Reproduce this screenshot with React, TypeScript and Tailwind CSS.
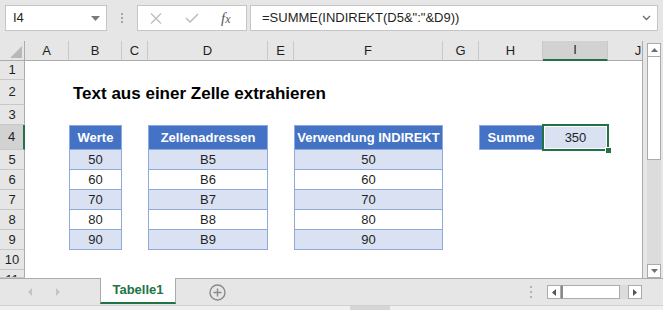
import React from "react";

const colHeaders: { l: string; sel?: boolean; j?: boolean }[] = [
  { l: "A" },
  { l: "B" },
  { l: "C" },
  { l: "D" },
  { l: "E" },
  { l: "F" },
  { l: "G" },
  { l: "H" },
  { l: "I", sel: true },
  { l: "J", j: true },
];

const rowStart = [
  "row-start-2",
  "row-start-3",
  "row-start-4",
  "row-start-5",
  "row-start-6",
  "row-start-7",
  "row-start-8",
  "row-start-9",
  "row-start-10",
  "row-start-11",
  "row-start-12",
];

function Tbl({ header, rows }: { header: string; rows: string[] }) {
  return (
    <div className="flex flex-col">
      <div className="h-[25px] bg-[#4472C4] border border-[#8EA9DB] flex items-center justify-center font-bold text-white whitespace-nowrap">
        {header}
      </div>
      {rows.map((r, i) => (
        <div
          key={i}
          className={`h-[20px] border-x border-b border-[#8EA9DB] flex items-center justify-center ${
            i % 2 === 0 ? "bg-[#D9E1F2]" : "bg-white"
          }`}
        >
          {r}
        </div>
      ))}
    </div>
  );
}

export default function App() {
  return (
    <div className="w-[663px] h-[310px] overflow-hidden bg-[#E6E6E6] flex flex-col font-['Liberation_Sans',Arial,sans-serif] text-[13px] text-[#1f1f1f]">
      {/* Formula bar */}
      <div className="h-[41px] flex items-start pt-[5px] pl-[5px] pr-[5px] shrink-0">
        <div className="w-[102px] h-[26px] bg-white border border-[#C6C6C6] flex items-center justify-between pl-[7px] pr-[6px]">
          <span>I4</span>
          <svg width="9" height="5" viewBox="0 0 9 5">
            <path d="M0 0h9L4.5 5z" fill="#7A7A7A" />
          </svg>
        </div>
        <div className="w-[30px] h-[26px] flex flex-col items-center justify-center gap-[2px]">
          <div className="w-[2px] h-[2px] bg-[#A6A6A6]" />
          <div className="w-[2px] h-[2px] bg-[#A6A6A6]" />
          <div className="w-[2px] h-[2px] bg-[#A6A6A6]" />
        </div>
        <div className="w-[110px] h-[26px] bg-white border border-[#C6C6C6] flex items-center pl-[12px]">
          <svg width="12" height="11" viewBox="0 0 12 11">
            <path d="M1 0.5L11 10.5M11 0.5L1 10.5" stroke="#BDBDBD" strokeWidth="1.3" fill="none" />
          </svg>
          <svg width="14" height="10" viewBox="0 0 14 10" className="ml-[23px]">
            <path d="M1 5L5 9L13 1" stroke="#BDBDBD" strokeWidth="1.6" fill="none" />
          </svg>
          <span className="ml-[22px] font-['Liberation_Serif',serif] italic text-[15px] text-[#595959] leading-none">
            f<span className="text-[12px]">x</span>
          </span>
        </div>
        <div className="ml-[3px] flex-1 h-[26px] bg-white border border-[#C6C6C6] flex items-center pl-[11px] pr-[6px] justify-between">
          <span>=SUMME(INDIREKT(D5&amp;":"&amp;D9))</span>
          <svg width="9" height="6" viewBox="0 0 9 6">
            <path d="M1 1L4.5 4.5L8 1" stroke="#6F6F6F" strokeWidth="1.4" fill="none" />
          </svg>
        </div>
      </div>

      {/* Sheet */}
      <div className="flex h-[237px] shrink-0">
        <div className="w-[642px] grid grid-cols-[25px_44px_53px_26px_120px_26px_149px_36px_64px_65px_34px] grid-rows-[20px_19px_25px_20px_25px_20px_20px_20px_20px_20px_20px_8px] bg-white">
          {/* corner */}
          <div className="col-start-1 row-start-1 bg-[#E6E6E6] border-r border-b border-[#ABABAB] relative">
            <svg width="12" height="12" viewBox="0 0 12 12" className="absolute right-[2px] bottom-[2px]">
              <path d="M12 0V12H0z" fill="#B8B8B8" />
            </svg>
          </div>
          {colHeaders.map((c, i) => (
            <div
              key={c.l}
              className={`row-start-1 border-b border-[#ABABAB] flex items-center overflow-hidden ${
                c.j ? "" : "border-r border-r-[#C8C8C8] justify-center"
              } ${c.sel ? "bg-[#D2D2D2] border-b-2 border-b-[#217346]" : "bg-[#E6E6E6]"}`}
              style={{ gridColumnStart: i + 2 }}
            >
              {c.j ? <div className="w-[60px] shrink-0 text-center">{c.l}</div> : c.l}
            </div>
          ))}
          {/* row headers */}
          {Array.from({ length: 11 }).map((_, i) => (
            <div
              key={i}
              className={`col-start-1 ${rowStart[i]} border-b border-b-[#C8C8C8] flex items-center justify-center overflow-hidden ${
                i === 3
                  ? "bg-[#D2D2D2] border-r-2 border-r-[#217346]"
                  : "bg-[#E6E6E6] border-r border-r-[#ABABAB]"
              } ${i === 10 ? "items-start" : ""}`}
            >
              {i === 10 ? <div className="h-[20px] leading-[20px] shrink-0">11</div> : i + 1}
            </div>
          ))}

          {/* title */}
          <div className="col-start-3 col-span-8 row-start-3 flex items-center pl-[4px] pt-[3px] font-bold text-[17px] text-black whitespace-nowrap">
            Text aus einer Zelle extrahieren
          </div>

          <div className="col-start-3 row-start-5 row-span-6">
            <Tbl header="Werte" rows={["50", "60", "70", "80", "90"]} />
          </div>
          <div className="col-start-5 row-start-5 row-span-6">
            <Tbl header="Zellenadressen" rows={["B5", "B6", "B7", "B8", "B9"]} />
          </div>
          <div className="col-start-7 row-start-5 row-span-6">
            <Tbl header="Verwendung INDIREKT" rows={["50", "60", "70", "80", "90"]} />
          </div>
          <div className="col-start-9 row-start-5 bg-[#4472C4] border border-[#8EA9DB] flex items-center justify-center font-bold text-white">
            Summe
          </div>
          <div className="col-start-10 row-start-5 relative bg-[#D9E1F2] flex items-center justify-center">
            350
            <div className="absolute -left-[1px] -top-[1px] -right-[1px] -bottom-[1px] border-2 border-[#217346]">
              <div className="w-full h-full border border-white" />
            </div>
            <div className="absolute -right-[4px] -bottom-[4px] w-[7px] h-[7px] bg-[#217346] border border-white" />
          </div>
        </div>

        {/* vertical scrollbar */}
        <div className="w-[21px] border-l border-[#ABABAB] bg-[#E6E6E6] pl-[4px] pt-[2px] flex flex-col">
          <div className="w-[14px] flex-1 flex flex-col bg-[#DCDCDC]">
            <div className="h-[14px] bg-white border border-[#ABABAB] flex items-center justify-center">
              <svg width="7" height="4" viewBox="0 0 7 4">
                <path d="M0 4L3.5 0L7 4z" fill="#6F6F6F" />
              </svg>
            </div>
            <div className="h-[103px] bg-white border-x border-b border-[#ABABAB]" />
            <div className="flex-1" />
            <div className="h-[14px] bg-white border border-[#ABABAB] flex items-center justify-center">
              <svg width="7" height="4" viewBox="0 0 7 4">
                <path d="M0 0L3.5 4L7 0z" fill="#6F6F6F" />
              </svg>
            </div>
          </div>
        </div>
      </div>

      {/* Tab bar */}
      <div className="h-[27px] shrink-0 border-t border-[#ABABAB] flex items-start">
        <div className="w-[100px] h-[26px] flex items-center">
          <svg width="4" height="8" viewBox="0 0 4 8" className="ml-[28px]">
            <path d="M4 0V8L0 4z" fill="#C4C4C4" />
          </svg>
          <svg width="4" height="8" viewBox="0 0 4 8" className="ml-[24px]">
            <path d="M0 0V8L4 4z" fill="#C4C4C4" />
          </svg>
        </div>
        <div className="w-[76px] h-[26px] -mt-px bg-white border-x border-[#ABABAB] border-b-2 border-b-[#217346] flex items-center justify-center font-bold text-[#217346]">
          Tabelle1
        </div>
        <div className="h-[26px] flex items-center ml-[33px]">
          <svg width="17" height="17" viewBox="0 0 17 17">
            <circle cx="8.5" cy="8.5" r="7.5" stroke="#8A8A8A" strokeWidth="1.4" fill="none" />
            <path d="M8.5 4.5V12.5M4.5 8.5H12.5" stroke="#8A8A8A" strokeWidth="1.4" />
          </svg>
        </div>
        <div className="flex-1" />
        <div className="h-[26px] flex flex-col items-center justify-center gap-[3px] mr-[15px]">
          <div className="w-[2px] h-[2px] bg-[#B0B0B0]" />
          <div className="w-[2px] h-[2px] bg-[#B0B0B0]" />
          <div className="w-[2px] h-[2px] bg-[#B0B0B0]" />
        </div>
        <div className="h-[26px] flex items-center">
          <div className="flex h-[14px] bg-[#DCDCDC]">
            <div className="w-[14px] bg-white border border-[#ABABAB] flex items-center justify-center">
              <svg width="4" height="7" viewBox="0 0 4 7">
                <path d="M4 0V7L0 3.5z" fill="#555" />
              </svg>
            </div>
            <div className="w-[59px] bg-white border-y border-r border-[#ABABAB] border-l-2 border-l-[#8A8A8A]" />
            <div className="w-[8px]" />
            <div className="w-[14px] bg-white border border-[#ABABAB] flex items-center justify-center">
              <svg width="4" height="7" viewBox="0 0 4 7">
                <path d="M0 0V7L4 3.5z" fill="#555" />
              </svg>
            </div>
          </div>
        </div>
        <div className="w-[21px]" />
      </div>

      {/* bottom strip */}
      <div className="h-[5px] shrink-0 border-t border-[#D0D0D0] bg-[#F0F0F0] flex">
        <div className="ml-[350px] w-[40px] bg-[#D6D6D6]" />
      </div>
    </div>
  );
}
